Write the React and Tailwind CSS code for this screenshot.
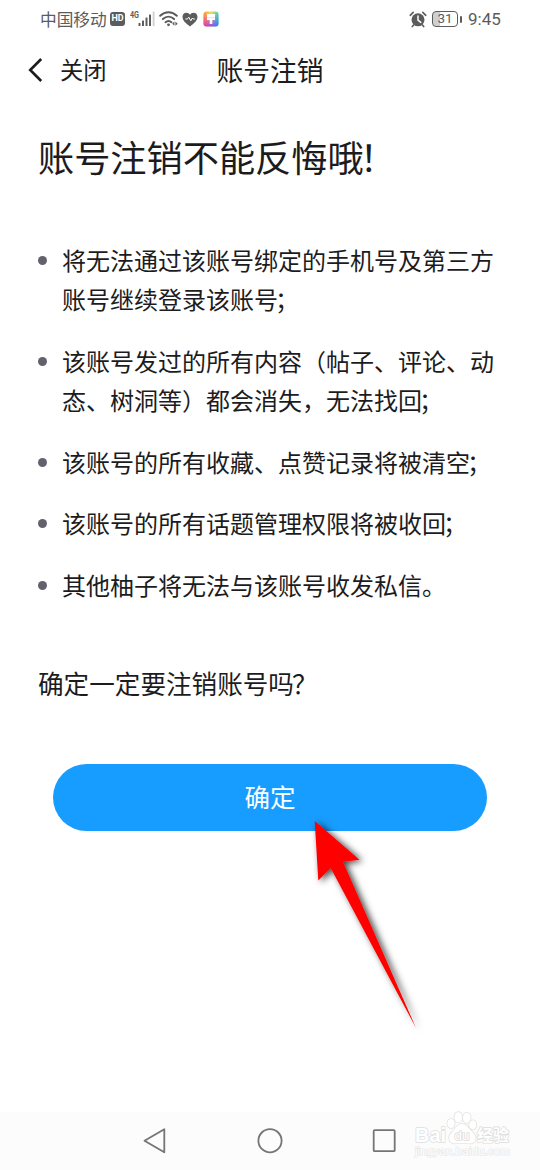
const notices = [
  { text: "将无法通过该账号绑定的手机号及第三方账号继续登录该账号", end: "；" },
  { text: "该账号发过的所有内容（帖子、评论、动态、树洞等）都会消失，无法找回", end: "；" },
  { text: "该账号的所有收藏、点赞记录将被清空", end: "；" },
  { text: "该账号的所有话题管理权限将被收回", end: "；" },
  { text: "其他柚子将无法与该账号收发私信。", end: "" },
];

function SignalIcon() {
  return (
    <svg width="26" height="18" viewBox="0 0 26 18" fill="#5c5c5c">
      <text x="0" y="7.5" fontSize="8.5" fontWeight="700" fontFamily="Roboto, sans-serif" textLength="9" lengthAdjust="spacingAndGlyphs">4G</text>
      <rect x="8.5" y="13" width="2" height="3" rx="0.5" />
      <rect x="12" y="10.5" width="2" height="5.5" rx="0.5" />
      <rect x="15.5" y="7.5" width="2" height="8.5" rx="0.5" />
      <rect x="19" y="4.5" width="2" height="11.5" rx="0.5" />
      <rect x="22.7" y="1.5" width="1.8" height="14.5" rx="0.5" fill="#cfcfcf" />
    </svg>
  );
}

function WifiIcon() {
  return (
    <svg width="20" height="18" viewBox="0 0 20 18" fill="none" stroke="#5c5c5c" strokeWidth="2" strokeLinecap="round">
      <path d="M1.2 5.8C6 1.1 13 1.1 17.8 5.8" />
      <path d="M3.9 9.1c3.4-3.1 7.8-3.1 11.2 0" />
      <path d="M6.5 12.2c1.9-1.6 4.1-1.6 6 0" />
      <circle cx="9.5" cy="14.8" r="1.4" fill="#5c5c5c" stroke="none" />
      <path d="M15.4 11.6v4.2l-2.2-2.1zM16.4 11.6v4.2l2.3-2.1z" fill="#5c5c5c" stroke="none" />
    </svg>
  );
}

function HeartIcon() {
  return (
    <svg width="16" height="15" viewBox="0 0 16 15">
      <path d="M8 14.5C4 11.6.5 8.5.5 4.8.5 2.3 2.3.7 4.4.7 6 .7 7.3 1.5 8 2.8 8.7 1.5 10 .7 11.6.7c2.1 0 3.9 1.6 3.9 4.1 0 3.7-3.5 6.8-7.5 9.7z" fill="#5c5c5c" />
      <path d="M3.4 7h2l1.4-1.8 2 3.6L10.4 6l.8 1h1.6" fill="none" stroke="#fff" strokeWidth="1" />
    </svg>
  );
}

function ThemeIcon() {
  return (
    <svg width="16" height="16" viewBox="0 0 16 16">
      <defs>
        <linearGradient id="themeTop" x1="0" y1="0" x2="1" y2="0">
          <stop offset="0" stopColor="#ff9a3d" />
          <stop offset="0.5" stopColor="#f6e04a" />
          <stop offset="1" stopColor="#45d0c8" />
        </linearGradient>
        <linearGradient id="themeBottom" x1="0" y1="0" x2="1" y2="0">
          <stop offset="0" stopColor="#f4408f" />
          <stop offset="0.5" stopColor="#a54cf0" />
          <stop offset="1" stopColor="#2f86f5" />
        </linearGradient>
        <linearGradient id="themeFade" x1="0" y1="0" x2="0" y2="1">
          <stop offset="0.1" stopColor="#000" />
          <stop offset="0.9" stopColor="#fff" />
        </linearGradient>
        <mask id="themeMask">
          <rect width="16" height="16" fill="url(#themeFade)" />
        </mask>
      </defs>
      <rect x="0.5" y="0.5" width="15" height="15" rx="3" fill="url(#themeTop)" />
      <rect x="0.5" y="0.5" width="15" height="15" rx="3" fill="url(#themeBottom)" mask="url(#themeMask)" />
      <path d="M4 3h8v6H9.3V13H6.7V9H4z" fill="#fff" />
      <path d="M4 6.8h8" stroke="#f7b9c9" strokeWidth="0.6" />
    </svg>
  );
}

function AlarmIcon() {
  return (
    <svg width="18" height="17" viewBox="0 0 18 17" fill="none" strokeLinecap="round">
      <circle cx="9" cy="8.8" r="6.5" fill="#5c5c5c" />
      <path d="M9 5v4.2l2.8 2.2" stroke="#fff" strokeWidth="1.5" />
      <path d="M1.2 4.3L4.2 1.4M16.8 4.3l-3-2.9M4.6 14l-1.3 1.6M13.4 14l1.3 1.6" stroke="#5c5c5c" strokeWidth="1.6" />
    </svg>
  );
}

function StatusBar() {
  return (
    <div className="flex h-[38px] items-center pl-[40px] pr-[39px] text-[#5c5c5c]">
      <span className="w-[67px] whitespace-nowrap text-[16.7px] leading-none">中国移动</span>
      <span className="ml-[3px] flex h-[14px] w-[15px] items-center justify-center rounded-[3px] bg-[#5c5c5c] font-[Roboto,sans-serif] text-[9px] font-bold text-white">
        HD
      </span>
      <span className="ml-[5px]"><SignalIcon /></span>
      <span className="ml-[3px]"><WifiIcon /></span>
      <span className="ml-[3px]"><HeartIcon /></span>
      <span className="ml-[5px]"><ThemeIcon /></span>
      <div className="ml-auto flex items-center">
        <AlarmIcon />
        <span className="ml-[5px] flex h-[16px] w-[26px] items-center justify-center rounded-[4px] border-[1.5px] border-[#5c5c5c] bg-linear-to-r from-[#cfcfcf] from-31% to-white to-31% font-[Roboto,sans-serif] text-[13.5px] leading-none">
          31
        </span>
        <span className="ml-[2px] h-[7px] w-[2px] rounded-full bg-[#5c5c5c]" />
        <span className="ml-[6px] w-[33px] whitespace-nowrap font-[Roboto,sans-serif] text-[17px] leading-none">9:45</span>
      </div>
    </div>
  );
}

function Header() {
  return (
    <header className="grid h-[64px] grid-cols-[1fr_auto_1fr] items-center text-[#1c1c1e]">
      <div className="flex items-center pl-[28px]">
        <svg width="15" height="24" viewBox="0 0 15 24" fill="none" stroke="#1c1c1e" strokeWidth="2.6">
          <path d="M13.2 1L2.2 12l11 11" />
        </svg>
        <span className="ml-[17px] text-[23.3px] leading-none">关闭</span>
      </div>
      <h1 className="text-[26.8px] leading-none">账号注销</h1>
    </header>
  );
}

function Arrow() {
  return (
    <svg className="absolute left-[290px] top-[800px] overflow-visible" width="160" height="250" viewBox="0 0 160 250">
      <defs>
        <filter id="arrowShadow" x="-30%" y="-20%" width="160%" height="140%">
          <feDropShadow dx="3" dy="1.5" stdDeviation="3.5" floodColor="#000" floodOpacity="0.75" />
        </filter>
      </defs>
      <path d="M24.7 21L69.5 59.7L53 61.7L126 228L40.7 68L28.3 80.5z" fill="#ff0000" filter="url(#arrowShadow)" />
    </svg>
  );
}

function Watermark() {
  return (
    <svg className="absolute left-[412px] top-[1108px]" width="102" height="52" viewBox="0 0 102 52" fill="#fff" stroke="#dedede" strokeWidth="1.6" strokeLinejoin="round" paintOrder="stroke">
      <text x="3" y="34" fontSize="21" fontWeight="700" fontFamily="Liberation Sans, sans-serif" textLength="31" lengthAdjust="spacingAndGlyphs">Bai</text>
      <g strokeWidth="1.4">
        <ellipse cx="39" cy="15.5" rx="3.7" ry="4.6" />
        <ellipse cx="46.3" cy="9.2" rx="3.9" ry="5.2" />
        <ellipse cx="54.8" cy="9.8" rx="3.9" ry="5.2" />
        <ellipse cx="60.8" cy="16.8" rx="3.6" ry="4.6" />
        <path d="M50 16c-5 0-6.500 5-9.500 7.500-5 4-4.500 12 2 12 3 0 5-.6 7.500-.6s5 .6 8 .6c7 0 7.500-7.500 2.500-11.500-3.500-3-5-8-10.500-8z" />
      </g>
      <text x="42.5" y="31.5" fontSize="13" fontFamily="Liberation Sans, sans-serif" textLength="15" lengthAdjust="spacingAndGlyphs">du</text>
      <text x="65" y="32.5" fontSize="16" fontWeight="700" fontFamily="Noto Sans CJK SC, sans-serif" textLength="32" lengthAdjust="spacingAndGlyphs">经验</text>
      <text x="3" y="47" fontSize="11" fontFamily="Liberation Sans, sans-serif" textLength="95" lengthAdjust="spacingAndGlyphs" stroke="#e6e6e6" strokeWidth="1.2">jingyan.baidu.com</text>
    </svg>
  );
}

function NavBar() {
  return (
    <nav className="flex h-[58px] items-center justify-between bg-[#fcfcfc] pl-[143px] pr-[144px]">
      <svg width="24" height="26" viewBox="0 0 24 26" fill="none" stroke="#757575" strokeWidth="1.8" strokeLinejoin="round">
        <path d="M21.3 1.3v23L1.5 12.7z" />
      </svg>
      <svg width="26" height="26" viewBox="0 0 26 26" fill="none" stroke="#757575" strokeWidth="1.8">
        <circle cx="13" cy="12.7" r="11.6" />
      </svg>
      <svg width="24" height="24" viewBox="0 0 24 24" fill="none" stroke="#757575" strokeWidth="1.8">
        <rect x="1.7" y="1.2" width="21" height="21" rx="1" />
      </svg>
    </nav>
  );
}

export default function App() {
  return (
    <div lang="zh-CN" className="relative flex h-[1170px] w-[540px] flex-col overflow-hidden bg-white font-['Noto_Sans_CJK_SC',sans-serif]">
      <StatusBar />
      <Header />
      <main className="flex-1 px-[38px] pt-[26px] text-[#1c1c1e]">
        <h2 className="text-[36.2px] leading-[56px]">
          账号注销不能反悔哦<span className="-ml-[4px]">！</span>
        </h2>
        <ul className="mt-[56px] flex flex-col gap-[22.3px]">
          {notices.map(({ text, end }) => (
            <li key={text} className="flex">
              <span className="mt-[16px] size-[9px] shrink-0 rounded-full bg-[#62626e]" />
              <span className="ml-[15px] w-[434px] shrink-0 text-[24px] leading-[39.3px]">
                {text}
                {end && <span className="-ml-[3px]">{end}</span>}
              </span>
            </li>
          ))}
        </ul>
        <p className="mt-[59px] text-[25.6px] leading-[40px]">
          确定一定要注销账号吗<span className="-ml-[2px]">？</span>
        </p>
        <button className="ml-[15px] mt-[61px] flex h-[67px] w-[434px] items-center justify-center rounded-full bg-[#179dff] pb-[4px] text-[25.5px] text-white">
          确定
        </button>
      </main>
      <NavBar />
      <Arrow />
      <Watermark />
    </div>
  );
}
